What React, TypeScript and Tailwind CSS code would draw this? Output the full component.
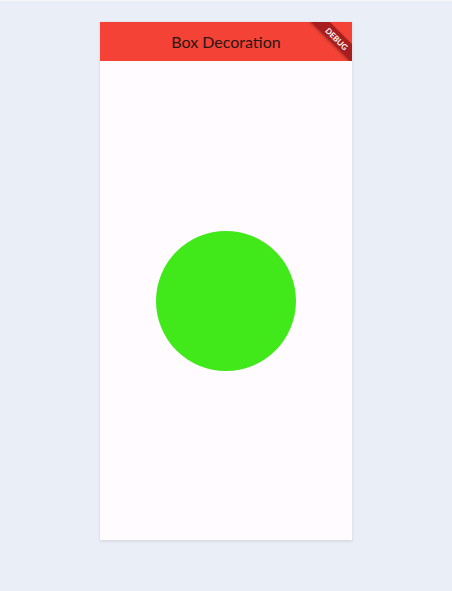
export default function App() {
  return (
    <div className="min-h-[591px] w-[452px] bg-[#eaeff7] pt-[21px] border-t border-[#f4f6fb]" style={{ fontFamily: 'Lato, "Noto Sans", sans-serif' }}>
      <div className="ml-[100px] w-[252px] h-[518px] flex flex-col bg-[#fffbfe] shadow-[0_1px_3px_rgba(0,0,0,0.12)]">
        <header className="relative h-[39px] bg-[#f44336] flex items-center justify-center overflow-hidden">
          <span className="text-[16px] text-[#2a1614]">Box Decoration</span>
          <div className="absolute top-[10px] right-[-17px] w-[64px] h-[13px] rotate-45 bg-[#a81e1e] flex items-center justify-center shadow-[0_1px_3px_rgba(0,0,0,0.35)]">
            <span className="text-[8px] font-bold text-white leading-none">DEBUG</span>
          </div>
        </header>
        <main className="flex-1 flex items-center justify-center">
          <div className="w-[140px] h-[140px] rounded-full bg-[#41e91b]" />
        </main>
      </div>
    </div>
  );
}
